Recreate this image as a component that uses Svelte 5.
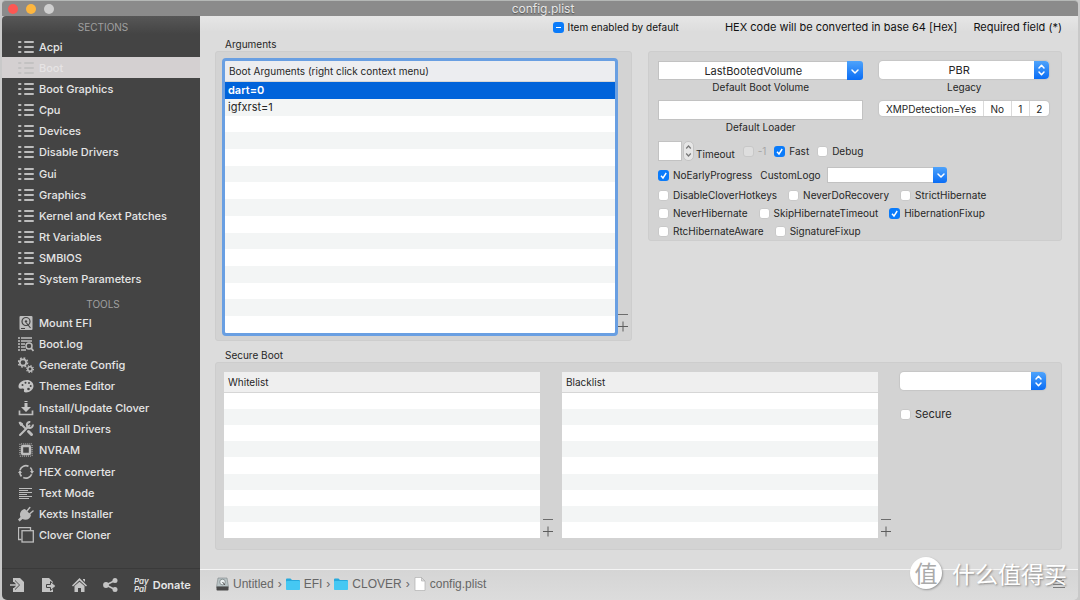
<script>
  const sections = [
    'Acpi', 'Boot', 'Boot Graphics', 'Cpu', 'Devices', 'Disable Drivers', 'Gui',
    'Graphics', 'Kernel and Kext Patches', 'Rt Variables', 'SMBIOS', 'System Parameters'
  ];

  const tools = [
    { name: 'Mount EFI', icon: 'disk' },
    { name: 'Boot.log', icon: 'log' },
    { name: 'Generate Config', icon: 'gears' },
    { name: 'Themes Editor', icon: 'palette' },
    { name: 'Install/Update Clover', icon: 'download' },
    { name: 'Install Drivers', icon: 'wrench' },
    { name: 'NVRAM', icon: 'chip' },
    { name: 'HEX converter', icon: 'refresh' },
    { name: 'Text Mode', icon: 'text' },
    { name: 'Kexts Installer', icon: 'plug' },
    { name: 'Clover Cloner', icon: 'copy' }
  ];

  let current = $state('Boot');
  let args = $state(['dart=0', 'igfxrst=1']);
  let selectedArg = $state(0);
  let volume = $state('LastBootedVolume');
  let legacy = $state('PBR');
  let xmp = $state('');

  // rows of boot flags under the timeout settings
  let flags = $state([
    [
      { name: 'DisableCloverHotkeys', on: false },
      { name: 'NeverDoRecovery', on: false },
      { name: 'StrictHibernate', on: false }
    ],
    [
      { name: 'NeverHibernate', on: false },
      { name: 'SkipHibernateTimeout', on: false },
      { name: 'HibernationFixup', on: true }
    ],
    [
      { name: 'RtcHibernateAware', on: false },
      { name: 'SignatureFixup', on: false }
    ]
  ]);

  const argRows = 15;
  const listRows = 9;

  function addArg() {
    args.push('');
    selectedArg = args.length - 1;
  }

  function removeArg() {
    args.splice(selectedArg, 1);
    selectedArg = 0;
  }
</script>

{#snippet chevron()}
  <svg width="16" height="18" viewBox="0 0 16 18" fill="none" stroke="#fff" stroke-width="1.500" stroke-linecap="round" stroke-linejoin="round">
    <path d="M5 8l3 3 3-3" />
  </svg>
{/snippet}

{#snippet updown()}
  <svg class="updown" width="15" height="18" viewBox="0 0 15 18" fill="none" stroke="#fff" stroke-width="1.500" stroke-linecap="round" stroke-linejoin="round">
    <path d="M5 7l2.500-2.700L10 7M5 11l2.500 2.700L10 11" />
  </svg>
{/snippet}

{#snippet plusMinus(onminus, onplus)}
  <div class="plus-minus">
    <button aria-label="Remove" onclick={onminus}>
      <svg width="12" height="12" viewBox="0 0 12 12" stroke="#6d6d6d"><path d="M1 6.500h10" /></svg>
    </button>
    <button aria-label="Add" onclick={onplus}>
      <svg width="12" height="12" viewBox="0 0 12 12" stroke="#5d5d5d"><path d="M1 6.500h10M6 1.500v10" /></svg>
    </button>
  </div>
{/snippet}

{#snippet toolIcon(icon)}
  <svg width="16" height="16" viewBox="0 0 16 16" fill="none" stroke="#bdbdbd" stroke-width="1.200">
    {#if icon === 'list'}
      <path stroke-width="2" stroke-linecap="round" d="M1 3h1.500M7 3h8M1 8h1.500M7 8h8M1 13h1.500M7 13h8" />
    {:else if icon === 'disk'}
      <rect x="1.500" y="1" width="13" height="14" rx="1" fill="#bdbdbd" stroke="none" />
      <circle cx="8" cy="6.500" r="4" stroke="#444" />
      <circle cx="8" cy="6.500" r="1.200" fill="#444" stroke="none" />
      <path stroke="#444" d="M8.500 8l4 5M3 13.500h4" />
    {:else if icon === 'log'}
      <path stroke-width="1.500" d="M0 2h2M3 2h11M0 5h2M3 5h11M0 8h2M3 8h4M0 11h2M3 11h4M0 14h2M3 14h5" />
      <circle cx="11" cy="10" r="3" fill="#444" stroke-width="1.500" />
      <path stroke-width="1.800" d="M13 12l2.500 3" />
    {:else if icon === 'gears'}
      <circle cx="5" cy="5.500" r="3.200" stroke-width="1.700" />
      <circle cx="5" cy="5.500" r="4.600" stroke-width="1.500" stroke-dasharray="1.800 1.810" />
      <circle cx="12" cy="12" r="2.200" stroke-width="1.500" />
      <circle cx="12" cy="12" r="3.400" stroke-width="1.200" stroke-dasharray="1.330 1.340" />
    {:else if icon === 'palette'}
      <path fill="#c4c4c4" stroke="none" d="M9 2C4 2 .5 5 .5 8.500c0 2 1.500 2.500 3.500 2 2-.3 2.500.5 2 1.800-.5 1.500.5 2.200 2 2.200 4 0 7.500-3 7.500-6.500C15.500 4.500 12.500 2 9 2z" />
      <g fill="#444" stroke="none">
        <circle cx="4.500" cy="7" r="1" /><circle cx="7.500" cy="4.700" r="1" />
        <circle cx="11" cy="5" r="1" /><circle cx="12.700" cy="8" r="1" /><circle cx="10.500" cy="11" r="1.300" />
      </g>
    {:else if icon === 'download'}
      <path stroke-width="1.700" d="M1.500 10.500v4h13v-4" />
      <path fill="#c4c4c4" stroke="none" d="M6.500 1h3v1h-3zM6.500 3h3v4H13l-5 5-5-5h3.500z" />
    {:else if icon === 'wrench'}
      <path stroke-width="2" stroke-linecap="round" d="M2 2l5 5M2 14l9.500-9.500" />
      <path stroke-width="2" d="M14.800 3.500A3 3 0 1 1 12.300 1" />
      <path stroke-width="3" stroke-linecap="round" d="M10.500 10.500l3 3" />
      <path fill="#bdbdbd" stroke="none" d="M.500 1.500L2 .5l3 2v2.500H2.500z" />
    {:else if icon === 'chip'}
      <rect x="4" y="4" width="8" height="8" rx="1" stroke-width="2.400" />
      <rect x="1.900" y="1.900" width="12.200" height="12.200" rx="1" stroke-width="1.800" stroke-dasharray="1 .950" opacity=".6" />
    {:else if icon === 'refresh'}
      <path stroke-width="1.700" d="M2 6a6.200 6.200 0 0 1 8.500-3.700M12.300 3.500A6.200 6.200 0 0 1 14.200 8M13.700 10.300A6.200 6.200 0 0 1 5.300 13.600M3.500 12.400A6.200 6.200 0 0 1 1.800 8.500" />
      <path fill="#bdbdbd" stroke="none" d="M12 7h4l-2 3zM0 9h4L2 6z" />
    {:else if icon === 'text'}
      <path stroke-width="1" d="M1 3.500h13M1 5.500h9M1 7.500h13M1 9.500h8M1 11.500h13M1 13.500h10" />
    {:else if icon === 'plug'}
      <path fill="#bdbdbd" stroke="none" d="M7 3c-4 .5-6 4.500-4.500 8L0 13.500 1.500 15.500 4.500 13c3.500 1.800 8 0 8.500-4z" />
      <path stroke-width="1.500" stroke-linecap="round" d="M9 5l2.800-3.500M11.500 8L15 5" />
    {:else}
      <path stroke-width="1.300" d="M3.500 12.500h-3v-12h12v3" />
      <rect x="4" y="3.700" width="11.300" height="11.300" stroke-width="1.300" />
    {/if}
  </svg>
{/snippet}

{#snippet listTable(title, count)}
  <table class="list">
    <thead><tr><th>{title}</th></tr></thead>
    <tbody>
      {#each Array(count) as _}
        <tr><td>&nbsp;</td></tr>
      {/each}
    </tbody>
  </table>
{/snippet}

<div class="window">
  <header class="titlebar">
    <button class="light close" aria-label="Close"></button>
    <button class="light minimize" aria-label="Minimize"></button>
    <button class="light zoom" aria-label="Zoom"></button>
    <span class="title">config.plist</span>
  </header>

  <div class="body">
    <aside class="sidebar">
      <nav>
        <h2>SECTIONS</h2>
        <ul class="sections">
          {#each sections as name}
            <li>
              <button class="item" class:active={current === name} onclick={() => (current = name)}>
                {@render toolIcon('list')}{name}
              </button>
            </li>
          {/each}
        </ul>
        <h2 class="tools-title">TOOLS</h2>
        <ul class="tools">
          {#each tools as tool}
            <li>
              <button class="item" class:active={current === tool.name} onclick={() => (current = tool.name)}>
                {@render toolIcon(tool.icon)}{tool.name}
              </button>
            </li>
          {/each}
        </ul>
      </nav>

      <footer class="actions">
        <button aria-label="Import">
          <svg width="15" height="16" viewBox="0 0 15 16">
            <path fill="#c4c4c4" d="M3 1h7l4 4v10H3v-4h2v2l5-5-5-5v2H3z" />
            <path stroke="#c4c4c4" stroke-width="1.600" fill="none" d="M0 8h7M4.500 4.500L8 8l-3.500 3.500" />
          </svg>
        </button>
        <button aria-label="Export">
          <svg width="15" height="16" viewBox="0 0 15 16">
            <path fill="#c4c4c4" d="M1 1h7l4 4v10H1z" />
            <path fill="#c4c4c4" stroke="#444" stroke-width="1" d="M5.500 7.500h4V4.500l5.500 4.500-5.500 4.500v-3h-4z" />
          </svg>
        </button>
        <button aria-label="Home">
          <svg width="15" height="16" viewBox="0 0 15 16" fill="#c4c4c4">
            <path d="M7.500 1L15 8.500l-1 1L7.500 3.600 1 9.500l-1-1L2 6.600zM11 2h2v3l-2-2zM2.500 9l5-4.300 5 4.300v6H9v-4H6v4H2.500z" />
          </svg>
        </button>
        <button aria-label="Share">
          <svg width="15" height="16" viewBox="0 0 15 16" fill="#c4c4c4">
            <circle cx="3" cy="8" r="2.900" /><circle cx="12" cy="3.500" r="2.500" /><circle cx="12" cy="12.500" r="2.500" />
            <path stroke="#c4c4c4" stroke-width="1.600" fill="none" d="M12 3.500L3 8l9 4.500" />
          </svg>
        </button>
        <button class="donate">
          <span class="paypal">Pay<br />Pal</span>Donate
        </button>
      </footer>
    </aside>

    <main>
      <div class="content">
        <div class="top">
          <label class="check">
            <input type="checkbox" indeterminate={true} />Item enabled by default
          </label>
          <span class="hex">HEX code will be converted in base 64 [Hex]</span>
          <span>Required field (*)</span>
        </div>

        <div class="columns">
          <section>
            <h3>Arguments</h3>
            <div class="box arguments">
              <table class="list args">
                <thead><tr><th>Boot Arguments (right click context menu)</th></tr></thead>
                <tbody>
                  {#each Array(argRows) as _, i}
                    <tr class:selected={i === selectedArg} onclick={() => i < args.length && (selectedArg = i)}>
                      <td>{args[i] ?? '\u00a0'}</td>
                    </tr>
                  {/each}
                </tbody>
              </table>
              {@render plusMinus(removeArg, addArg)}
            </div>
          </section>

          <section class="box settings">
            <div class="fields">
              <div class="field">
                <div class="combo">
                  <input id="volume" type="text" bind:value={volume} />
                  <button aria-label="Choose volume">{@render chevron()}</button>
                </div>
                <label for="volume">Default Boot Volume</label>
              </div>
              <div class="field">
                <div class="popup">
                  <select id="legacy" bind:value={legacy}>
                    <option>PBR</option>
                    <option>PBRtest</option>
                    <option>PBRsata</option>
                  </select>
                  {@render updown()}
                </div>
                <label for="legacy">Legacy</label>
              </div>
              <div class="field">
                <input id="loader" class="loader" type="text" />
                <label for="loader">Default Loader</label>
              </div>
              <div class="segments">
                {#each ['XMPDetection=Yes', 'No', '1', '2'] as option}
                  <button class:chosen={xmp === option} onclick={() => (xmp = option)}>{option}</button>
                {/each}
              </div>
            </div>

            <div class="line timeout">
              <input id="timeout" type="text" />
              <button class="stepper" aria-label="Change timeout">
                <svg width="11" height="18" viewBox="0 0 11 18" fill="none" stroke="#777" stroke-width="1.200">
                  <path d="M3.200 6.500l2.300-2.500 2.300 2.500M3.200 11.500L5.500 14l2.300-2.500" />
                </svg>
              </button>
              <label class="timeout-label" for="timeout">Timeout</label>
              <label class="check disabled"><input type="checkbox" disabled />-1</label>
              <label class="check"><input type="checkbox" checked />Fast</label>
              <label class="check"><input type="checkbox" />Debug</label>
            </div>

            <div class="line logo">
              <label class="check"><input type="checkbox" checked />NoEarlyProgress</label>
              <label for="logo">CustomLogo</label>
              <div class="combo small">
                <input id="logo" type="text" />
                <button aria-label="Choose logo">{@render chevron()}</button>
              </div>
            </div>

            {#each flags as row}
              <div class="line flags">
                {#each row as flag}
                  <label class="check"><input type="checkbox" bind:checked={flag.on} />{flag.name}</label>
                {/each}
              </div>
            {/each}
          </section>
        </div>

        <section class="secure">
          <h3>Secure Boot</h3>
          <div class="box secure-box">
            <div class="list-wrap">
              {@render listTable('Whitelist', listRows)}
              {@render plusMinus()}
            </div>
            <div class="list-wrap">
              {@render listTable('Blacklist', listRows)}
              {@render plusMinus()}
            </div>
            <div class="policy">
              <div class="popup">
                <select aria-label="Secure boot policy">
                  <option></option>
                  <option>Allow</option>
                  <option>Deny</option>
                </select>
                {@render updown()}
              </div>
              <label class="check big"><input type="checkbox" />Secure</label>
            </div>
          </div>
        </section>
      </div>

      <footer class="path">
        <a href="#untitled">
          <svg width="13" height="14" viewBox="0 0 13 14">
            <path fill="#b9c4c6" stroke="#7d8486" stroke-width=".6" d="M2 1h9l1.500 9h-12z" />
            <circle cx="6.500" cy="5" r="2.800" fill="#e8eeef" stroke="#6f7779" stroke-width=".7" />
            <path stroke="#555" d="M6.500 5L9 8" />
            <rect x=".5" y="9.500" width="12" height="4" rx=".8" fill="#4a4a4a" />
          </svg>Untitled</a>
        <span class="sep">›</span>
        {#each ['EFI', 'CLOVER'] as folder}
          <a href="#{folder}">
            <svg width="14" height="14" viewBox="0 0 14 14">
              <path fill="#27a9dc" d="M0 2.500q0-1 1-1h3.500l1.500 1.500h7q1 0 1 1V6H0z" />
              <rect y="4" width="14" height="9" rx=".8" fill="#45c8f3" />
            </svg>{folder}</a>
          <span class="sep">›</span>
        {/each}
        <a href="#config">
          <svg width="12" height="14" viewBox="0 0 12 14">
            <path fill="#fff" stroke="#b0b0b0" stroke-width=".7" d="M1 .5h6.500L11 4v9.500H1z" />
            <path fill="#ddd" stroke="#b0b0b0" stroke-width=".7" d="M7.500.5V4H11z" />
          </svg>config.plist</a>
        <button class="menu" aria-label="Menu">
          <svg width="14" height="12" viewBox="0 0 14 12" stroke="#7b7b7b"><path d="M4 1.500h6M2 3.500h10M1 6.500h12M1 9.500h12" /></svg>
        </button>
      </footer>
    </main>
  </div>

  <div class="watermark"><span class="badge">值</span>什么值得买</div>
</div>

<style>
  :global(body) {
    background: #c9c9c9;
  }

  .window {
    position: relative;
    display: flex;
    flex-direction: column;
    min-height: 100vh;
    box-sizing: border-box;
    padding: 0 2px;
    font-family: Inter, "Noto Sans CJK SC", sans-serif;
    font-size: 10px;
    color: #262626;
  }

  button, input, select {
    font: inherit;
    color: inherit;
    margin: 0;
    padding: 0;
    border: none;
    box-sizing: border-box;
  }

  button {
    background: none;
  }

  svg {
    display: block;
    flex: none;
  }

  h2, h3, ul {
    margin: 0;
    padding: 0;
    list-style: none;
    font-weight: 400;
  }

  /* title bar */
  .titlebar {
    display: flex;
    align-items: center;
    gap: 8px;
    height: 16px;
    padding: 0 6px;
    background: #8b8b8b;
    border-top: 1px solid #b5b8b6;
    border-radius: 4px 4px 0 0;
    box-sizing: border-box;
  }

  .light {
    width: 10px;
    height: 10px;
    border-radius: 50%;
  }

  .close { background: #fc5753; }
  .minimize { background: #fdb63f; }
  .zoom { background: #cfcfcf; }

  .title {
    flex: 1;
    margin-right: 48px;
    text-align: center;
    font-size: 12px;
    line-height: 14px;
    color: #e6e6e6;
    text-shadow: 0 1px 1px #555;
  }

  .body {
    display: flex;
    flex: 1;
  }

  /* sidebar */
  .sidebar {
    display: flex;
    flex-direction: column;
    width: 198px;
    flex: none;
    background: linear-gradient(#575757, #444 18px);
    border-radius: 4px 0 0 5px;
    color: #e6e6e6;
  }

  nav {
    flex: 1;
  }

  h2 {
    height: 20px;
    padding-left: 4px;
    text-align: center;
    font-size: 10px;
    line-height: 22px;
    color: #a0a0a0;
  }

  .tools-title {
    height: 22px;
    line-height: 28px;
  }

  ul {
    display: grid;
    grid-auto-rows: 1fr;
  }

  .sections { height: 254px; }
  .tools { height: 234px; }

  .item {
    display: flex;
    align-items: center;
    gap: 5px;
    width: 100%;
    height: 100%;
    padding-left: 16px;
    font-size: 11px;
    font-weight: 500;
    text-align: left;
  }

  .item.active {
    background: #d4d0d1;
    color: #e6e3e4;
  }

  .active svg {
    opacity: .7;
  }

  .actions {
    display: flex;
    align-items: center;
    gap: 16px;
    height: 32px;
    padding: 0 8px;
    border-top: 1px solid #3a3a3a;
    box-sizing: border-box;
  }

  .donate {
    display: flex;
    align-items: center;
    gap: 4px;
    font-size: 11px;
    font-weight: 600;
  }

  .paypal {
    font-size: 8px;
    line-height: 8px;
    font-style: italic;
    text-align: left;
  }

  /* content */
  main {
    display: flex;
    flex-direction: column;
    flex: 1;
    min-width: 0;
    background: #dcdcdc;
    border-radius: 0 4px 5px 0;
  }

  .content {
    flex: 1;
    padding: 0 16px 0 15px;
    background: linear-gradient(#e6e6e6, #dcdcdc 16px);
  }

  .top {
    display: flex;
    align-items: center;
    justify-content: flex-end;
    gap: 16px;
    height: 22px;
    font-size: 11px;
    color: #111;
  }

  .top .check {
    font-size: 10px;
  }

  .hex {
    margin-left: 30px;
  }

  .columns {
    display: grid;
    grid-template-columns: 417fr 414fr;
    gap: 16px;
    align-items: start;
  }

  h3 {
    padding-left: 10px;
    font-size: 10px;
    line-height: 13px;
  }

  .box {
    background: #d3d3d3;
    border: 1px solid #cdcdcd;
    border-radius: 3px;
    box-sizing: border-box;
  }

  .arguments {
    display: flex;
    align-items: flex-end;
    padding: 9px 2px 7px 9px;
  }

  .list {
    flex: 1;
    width: 100%;
    height: 166px;
    border-collapse: collapse;
    background: #fff;
    table-layout: fixed;
  }

  .list th {
    height: 20px;
    padding: 0 4px;
    text-align: left;
    font-weight: 400;
    background: #efefef;
    border-bottom: 1px solid #d6d6d6;
  }

  .list td {
    padding: 0 3px;
    font-size: 11px;
    line-height: 14px;
  }

  .list tbody tr:nth-child(even) {
    background: #f3f5f5;
  }

  .list.args {
    height: 272px;
    outline: 3px solid #699fe2;
    border-radius: 1px;
  }

  .args th {
    background: #ecedf0;
  }

  .list tbody tr.selected {
    background: #0063da;
    color: #fff;
    font-weight: 600;
  }

  .plus-minus {
    display: flex;
    flex-direction: column;
    align-self: flex-end;
    margin: 0 0 1px 2px;
  }

  /* boot settings */
  .settings {
    margin-top: 13px;
    padding: 9px 12px 0 9px;
  }

  .fields {
    display: grid;
    grid-template-columns: 206fr 170fr;
    column-gap: 16px;
    row-gap: 6px;
    align-items: start;
  }

  .field {
    display: flex;
    flex-direction: column;
  }

  .field label {
    text-align: center;
    line-height: 14px;
  }

  input[type="text"] {
    min-width: 0;
    background: #fff;
    border: 1px solid #c2c2c2;
  }

  .combo {
    display: flex;
    height: 19px;
  }

  .combo input {
    flex: 1;
    text-align: center;
    font-size: 11px;
    border-right: none;
  }

  .combo button {
    display: flex;
    align-items: center;
    width: 16px;
    background: linear-gradient(#4ea3fb, #0a6df5);
    border-radius: 0 3px 3px 0;
  }

  .combo.small {
    width: 120px;
    height: 16px;
    margin-left: -2px;
  }

  .combo.small button {
    width: 14px;
    overflow: hidden;
  }

  .popup {
    position: relative;
    height: 18px;
    margin-bottom: 1px;
  }

  .popup select {
    appearance: none;
    width: 100%;
    height: 18px;
    padding-right: 10px;
    background: #fff;
    border-radius: 4px;
    box-shadow: 0 0 1px 1px #c6c6c6;
    text-align: center;
    text-align-last: center;
    font-size: 11px;
  }

  .updown {
    position: absolute;
    top: 0;
    right: 0;
    background: linear-gradient(#4ea3fb, #0a6df5);
    border-radius: 0 4px 4px 0;
    pointer-events: none;
  }

  .loader {
    height: 20px;
  }

  .segments {
    display: flex;
    height: 15px;
    margin-top: 1px;
    background: #fff;
    border-radius: 4px;
    box-shadow: 0 0 1px 1px #c6c6c6;
  }

  .segments button {
    flex: auto;
  }

  .segments button + button {
    border-left: 1px solid #dadada;
  }

  .segments .chosen {
    background: #e2e2e2;
  }

  .line {
    display: flex;
    align-items: center;
    gap: 11px;
    height: 18px;
  }

  .check {
    display: inline-flex;
    align-items: center;
    gap: 4px;
    white-space: nowrap;
  }

  .check input {
    appearance: none;
    width: 11px;
    height: 11px;
    background: #fff;
    border: 1px solid #c9c9c9;
    border-radius: 3px;
  }

  .check input:checked {
    border: none;
    background: #0a7bfa url("data:image/svg+xml,%3Csvg xmlns='http://www.w3.org/2000/svg' viewBox='0 0 11 11'%3E%3Cpath d='M3 5.700l2 2.300 3.200-5' fill='none' stroke='white' stroke-width='1.400'/%3E%3C/svg%3E");
  }

  .check input:indeterminate {
    border: none;
    background: linear-gradient(#fff, #fff) center / 5px 1px no-repeat #0a7bfa;
  }

  .check input:disabled {
    background: #dedede;
    border-color: #c8c8c8;
  }

  .disabled {
    color: #a5a5a5;
  }

  .timeout {
    gap: 8px;
    height: 26px;
    margin-top: 4px;
  }

  .timeout input[type="text"] {
    width: 24px;
    height: 20px;
  }

  .stepper {
    margin: 0 -6px 0 -7px;
    background: #e6e6e6;
    border: 1px solid #c4c4c4;
    border-radius: 5px;
    width: 11px;
    display: flex;
    justify-content: center;
  }

  .timeout-label {
    padding-top: 5px;
  }

  .logo {
    gap: 8px;
    height: 22px;
  }

  /* secure boot */
  .secure {
    margin-top: 8px;
  }

  .secure-box {
    display: grid;
    grid-template-columns: 1fr 1fr 161px;
    column-gap: 8px;
    padding: 9px 0 11px 8px;
  }

  .list-wrap {
    display: flex;
  }

  .policy {
    padding-right: 15px;
  }

  .big {
    margin-top: 16px;
    font-size: 11px;
  }

  /* path bar */
  .path {
    display: flex;
    align-items: center;
    height: 31px;
    padding: 0 12px 2px 16px;
    border-top: 1px solid #f4f4f4;
    background: linear-gradient(#d5d5d5, #dcdcdc);
    border-radius: 0 0 5px 0;
    box-sizing: border-box;
    font-family: "Liberation Sans", Arial, sans-serif;
    font-size: 12px;
  }

  .path a {
    display: flex;
    align-items: center;
    gap: 4px;
    color: #666;
    text-decoration: none;
  }

  .sep {
    margin: 0 4px;
    color: #666;
  }

  .menu {
    margin-left: auto;
  }

  .watermark {
    position: absolute;
    right: 13px;
    bottom: 11px;
    display: flex;
    align-items: center;
    gap: 10px;
    font-family: "Noto Sans CJK SC", sans-serif;
    font-size: 23px;
    line-height: 32px;
    color: #fff;
    text-shadow: 1px 1px 2px #888;
    pointer-events: none;
  }

  .badge {
    width: 32px;
    height: 32px;
    border-radius: 50%;
    background: #fff;
    box-shadow: 1px 1px 2px #999;
    color: #aaa;
    text-align: center;
    line-height: 31px;
    text-shadow: none;
  }
</style>
